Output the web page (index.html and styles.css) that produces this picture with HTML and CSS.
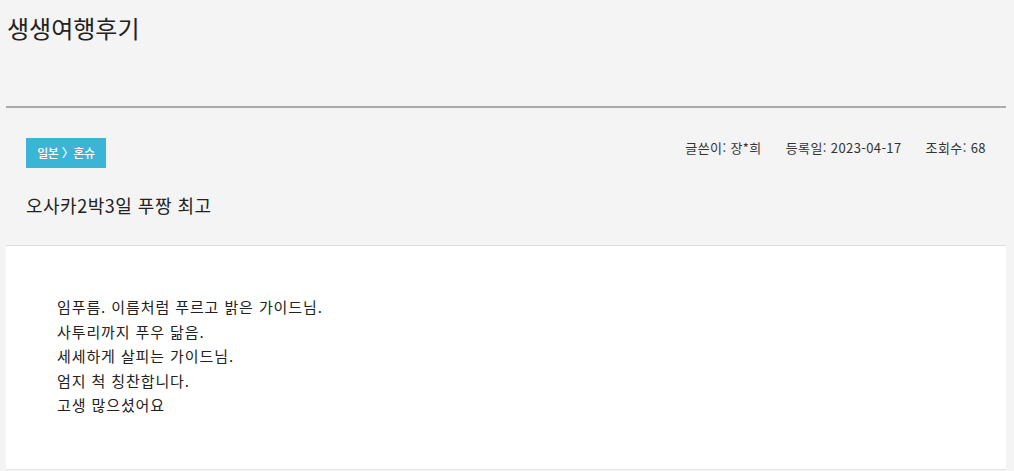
FILE: index.html
```html
<!DOCTYPE html>
<html lang="ko">
<head>
<meta charset="utf-8">
<link rel="stylesheet" href="styles.css">
</head>
<body>
<div class="page">
  <header class="page-head">
    <h1 class="page-title">생생여행후기</h1>
  </header>
  <section class="post">
    <div class="post-head">
      <div class="post-top">
        <span class="badge">일본 〉혼슈</span>
        <ul class="meta">
          <li>글쓴이: 장*희</li>
          <li>등록일: 2023-04-17</li>
          <li>조회수: 68</li>
        </ul>
      </div>
      <h2 class="post-title">오사카2박3일 푸짱 최고</h2>
    </div>
    <div class="post-body">
      <p>임푸름. 이름처럼 푸르고 밝은 가이드님.</p>
      <p>사투리까지 푸우 닮음.</p>
      <p>세세하게 살피는 가이드님.</p>
      <p>엄지 척 칭찬합니다.</p>
      <p>고생 많으셨어요</p>
    </div>
  </section>
</div>
</body>
</html>
```
FILE: styles.css
```css
* { box-sizing: border-box; }
html, body { margin: 0; padding: 0; }
body {
  background: #f4f4f4;
  font-family: "Noto Sans CJK KR", "Malgun Gothic", sans-serif;
  color: #222;
}
.page {
  width: 1000px;
  margin-left: 6px;
}
.page-head {
  height: 108px;
  border-bottom: 2px solid #aaaaaa;
  padding-top: 10px;
}
.page-title {
  margin: 0 0 0 1px;
  font-size: 24px;
  font-weight: 400;
  line-height: 36px;
  color: #222;
}
.post-head {
  padding: 30px 20px 0 20px;
  height: 138px;
  border-bottom: 1px solid #dedede;
}
.post-top {
  display: flex;
  justify-content: space-between;
  align-items: flex-start;
}
.badge {
  display: inline-block;
  width: 80px;
  height: 30px;
  line-height: 30px;
  text-align: center;
  background: #3bb5d5;
  color: #fff;
  font-size: 12px;
  font-weight: 500;
  letter-spacing: -0.3px;
}
.meta {
  list-style: none;
  margin: 0;
  padding: 0;
  display: flex;
  gap: 24px;
  font-size: 13px;
  line-height: 20px;
  color: #333;
  letter-spacing: 0.4px;
}
.post-title {
  margin: 24px 0 0 0;
  font-size: 18px;
  font-weight: 400;
  line-height: 26px;
  color: #222;
  letter-spacing: 0.5px;
}
.post-body {
  background: #fff;
  padding: 49px 51px 51px;
  border-bottom: 1px solid #e4e4e4;
}
.post-body p {
  margin: 0;
  font-size: 15px;
  line-height: 24.6px;
  color: #222;
  letter-spacing: 0.9px;
}
```
